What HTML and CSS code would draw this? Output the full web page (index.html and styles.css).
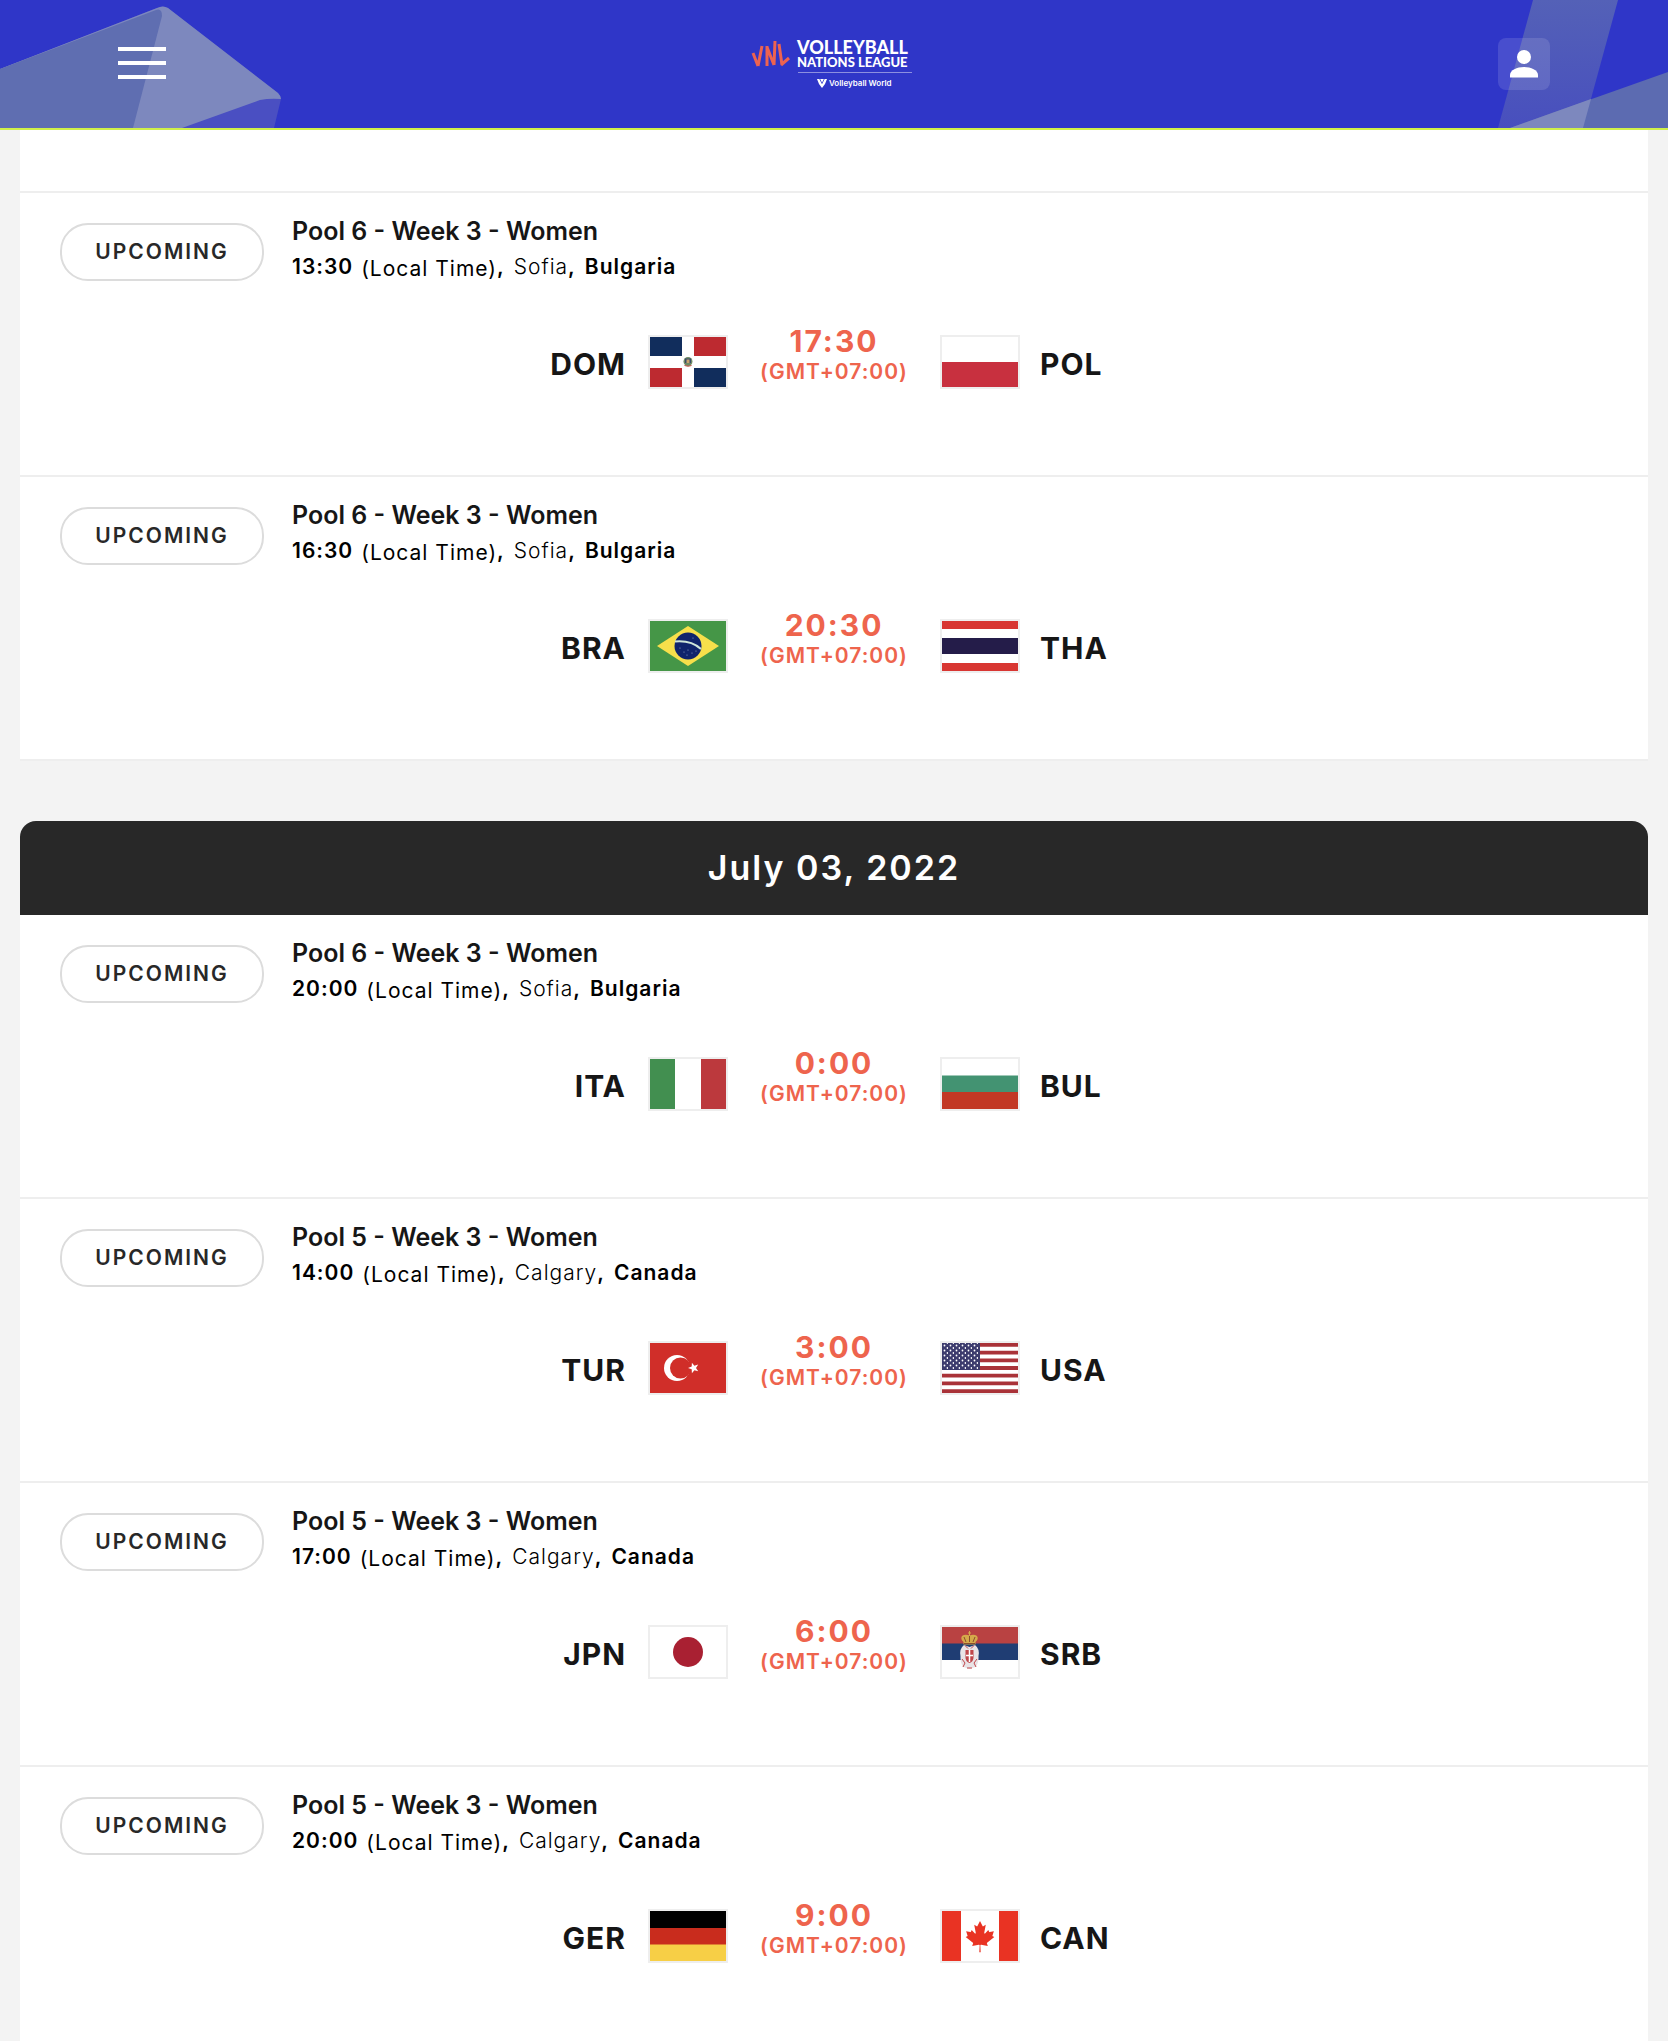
FILE: index.html
```html
<!DOCTYPE html>
<html lang="en">
<head>
<meta charset="utf-8">
<meta name="viewport" content="width=device-width, initial-scale=1">
<title>Volleyball Nations League – Schedule</title>
<link rel="stylesheet" href="styles.css">
</head>
<body>

<header class="site-header">
  <svg class="deco deco-left" width="284" height="128" viewBox="0 0 284 128" aria-hidden="true">
    <path d="M0 69 157 8Q163 5 168 8L278 93Q281 96 281 99L274 128H0z" fill="#4a4fc2"/>
    <path d="M0 69 157 8Q163 5 168 8L278 93Q281 96 281 99Q270 98 260 100L182 128H0z" fill="#7d88be"/>
    <path d="M0 69 156 10Q162 8 162 16L133 128H0z" fill="#5f6eb1"/>
  </svg>
  <svg class="deco deco-right" width="170" height="128" viewBox="0 0 170 128" aria-hidden="true">
    <defs>
      <linearGradient id="band" x1="0" y1="0" x2="0" y2="1"><stop offset="0" stop-color="#5461b7"/><stop offset="1" stop-color="#484fbe"/></linearGradient>
    </defs>
    <path d="M35 0H120L85 128H0z" fill="url(#band)"/>
    <path d="M12 128 170 72V128z" fill="#5c6bb1"/>
    <path d="M12 128 93 99 85 128z" fill="#7d88be"/>
  </svg>

  <button class="menu-button" type="button" aria-label="Menu">
    <span class="menu-bar"></span><span class="menu-bar"></span><span class="menu-bar"></span>
  </button>

  <a class="logo" href="#" aria-label="Volleyball Nations League">
    <svg width="166" height="64" viewBox="0 -6 166 64" aria-hidden="true">
      <g fill="none" stroke="#ed6350" stroke-width="3">
        <path d="M2 15 7 28M11 8 7 28"/>
        <path d="M16 28V8M16 9 23 27M24 3 23 27"/>
        <path d="M28 6 31 27M30 27 38 20"/>
      </g>
      <text class="logo-main" x="46" y="16">VOLLEYBALL</text>
      <text class="logo-sub" x="46" y="29">NATIONS LEAGUE</text>
      <path d="M47 34.500H161" stroke="#8c8fe0"/>
      <path d="M66 41H76L74 46 71 50 68 46z" fill="#fff"/>
      <path d="M68.500 40.500 71 45.500 73.500 40.500" stroke="#2f36c8" fill="none" stroke-width=".8"/>
      <text class="logo-tag" x="78" y="48">Volleyball World</text>
    </svg>
  </a>

  <button class="user-button" type="button" aria-label="Account">
    <svg width="28" height="28" viewBox="0 0 28 28" aria-hidden="true"><circle cx="14" cy="7" r="7" fill="#fff"/><path d="M0 27.500V25C0 20 7 17 14 17S28 20 28 25V27.500z" fill="#fff"/></svg>
  </button>
</header>

<main class="schedule">
  <section class="day">
    <div class="match-tail"></div>

    <article class="match">
      <div class="match-info">
        <span class="badge">Upcoming</span>
        <div>
          <h3 class="match-title">Pool 6 - Week 3 - Women</h3>
          <p class="match-place"><b>13:30</b> <span class="local">(Local Time)</span><b>,</b> <span class="city">Sofia</span><b>,</b> <b class="country">Bulgaria</b></p>
        </div>
      </div>
      <div class="fixture">
        <span class="team home">DOM</span>
        <svg class="flag" viewBox="0 0 76 50" role="img" aria-label="Dominican Republic">
          <path fill="#fff" d="M0 0H76V50H0z"/>
          <path fill="#112d5c" d="M0 0H32V19H0zM44 31H76V50H44z"/>
          <path fill="#bd2a30" d="M44 0H76V19H44zM0 31H32V50H0z"/>
          <circle cx="38" cy="24.500" r="4.500" fill="#6f8a64"/>
          <path d="M35 21.500H41V26H35z" fill="#394c6c"/><path d="M36.500 22.500H39.500V26H36.500z" fill="#c9a36a"/>
          <path d="M34.500 28.500Q38 30 41.500 28.500" stroke="#bd4a3a" fill="none"/>
        </svg>
        <p class="kickoff"><time class="clock">17:30</time><span class="zone">(GMT+07:00)</span></p>
        <svg class="flag" viewBox="0 0 76 50" role="img" aria-label="Poland"><path fill="#fff" d="M0 0H76V25H0z"/><path fill="#c8303f" d="M0 25H76V50H0z"/></svg>
        <span class="team">POL</span>
      </div>
    </article>

    <article class="match">
      <div class="match-info">
        <span class="badge">Upcoming</span>
        <div>
          <h3 class="match-title">Pool 6 - Week 3 - Women</h3>
          <p class="match-place"><b>16:30</b> <span class="local">(Local Time)</span><b>,</b> <span class="city">Sofia</span><b>,</b> <b class="country">Bulgaria</b></p>
        </div>
      </div>
      <div class="fixture">
        <span class="team home">BRA</span>
        <svg class="flag" viewBox="0 0 76 50" role="img" aria-label="Brazil">
          <path fill="#459647" d="M0 0H76V50H0z"/>
          <path fill="#f7df4b" d="M38 5 69 25 38 45 7 25z"/>
          <circle cx="38" cy="25" r="13.500" fill="#10246c"/>
          <path d="M25 20.500Q41 19 51 28" stroke="#cfe6da" stroke-width="2" fill="none"/>
          <g fill="#8fa0c8"><circle cx="30" cy="27" r=".6"/><circle cx="34" cy="31" r=".6"/><circle cx="38" cy="29" r=".6"/><circle cx="37" cy="34" r=".6"/><circle cx="42" cy="32" r=".6"/><circle cx="46" cy="30" r=".6"/><circle cx="43" cy="17" r=".6"/></g>
        </svg>
        <p class="kickoff"><time class="clock">20:30</time><span class="zone">(GMT+07:00)</span></p>
        <svg class="flag" viewBox="0 0 76 50" role="img" aria-label="Thailand"><path fill="#fff" d="M0 0H76V50H0z"/><path fill="#d83632" d="M0 0H76V8H0zM0 42H76V50H0z"/><path fill="#241c49" d="M0 17H76V33H0z"/></svg>
        <span class="team">THA</span>
      </div>
    </article>
  </section>

  <section class="day">
    <h2 class="day-title">July 03, 2022</h2>

    <article class="match">
      <div class="match-info">
        <span class="badge">Upcoming</span>
        <div>
          <h3 class="match-title">Pool 6 - Week 3 - Women</h3>
          <p class="match-place"><b>20:00</b> <span class="local">(Local Time)</span><b>,</b> <span class="city">Sofia</span><b>,</b> <b class="country">Bulgaria</b></p>
        </div>
      </div>
      <div class="fixture">
        <span class="team home">ITA</span>
        <svg class="flag" viewBox="0 0 76 50" role="img" aria-label="Italy"><path fill="#fff" d="M0 0H76V50H0z"/><path fill="#428f50" d="M0 0H25V50H0z"/><path fill="#bc393d" d="M51 0H76V50H51z"/></svg>
        <p class="kickoff"><time class="clock">0:00</time><span class="zone">(GMT+07:00)</span></p>
        <svg class="flag" viewBox="0 0 76 50" role="img" aria-label="Bulgaria"><path fill="#fff" d="M0 0H76V17H0z"/><path fill="#439372" d="M0 16.500H76V33H0z"/><path fill="#c23824" d="M0 33H76V50H0z"/></svg>
        <span class="team">BUL</span>
      </div>
    </article>

    <article class="match">
      <div class="match-info">
        <span class="badge">Upcoming</span>
        <div>
          <h3 class="match-title">Pool 5 - Week 3 - Women</h3>
          <p class="match-place"><b>14:00</b> <span class="local">(Local Time)</span><b>,</b> <span class="city">Calgary</span><b>,</b> <b class="country">Canada</b></p>
        </div>
      </div>
      <div class="fixture">
        <span class="team home">TUR</span>
        <svg class="flag" viewBox="0 0 76 50" role="img" aria-label="Turkey">
          <path fill="#d02e29" d="M0 0H76V50H0z"/>
          <circle cx="27" cy="25" r="13" fill="#fff"/><circle cx="30.500" cy="25" r="10.500" fill="#d02e29"/>
          <path fill="#fff" d="M38 25 41.700 23.600 41.900 19.800 44.400 22.800 48.200 21.600 46 25 48.200 28.300 44.400 27.200 41.900 30.200 41.700 26.300z"/>
        </svg>
        <p class="kickoff"><time class="clock">3:00</time><span class="zone">(GMT+07:00)</span></p>
        <svg class="flag" viewBox="0 0 76 50" role="img" aria-label="United States">
          <defs>
            <pattern id="stars" width="6" height="5" patternUnits="userSpaceOnUse"><circle cx="2.500" cy="2.500" r=".9" fill="#fff"/><circle cx="5.500" cy="5" r=".9" fill="#fff"/><circle cx="5.500" cy="0" r=".9" fill="#fff"/></pattern>
          </defs>
          <path fill="#fff" d="M0 0H76V50H0z"/>
          <path stroke="#a93238" stroke-width="3.850" d="M0 1.920H76M0 9.620H76M0 17.310H76M0 25H76M0 32.690H76M0 40.380H76M0 48.080H76"/>
          <path fill="#3c3b6d" d="M0 0H38V27H0z"/><path fill="url(#stars)" d="M0 0H37V26H0z"/>
        </svg>
        <span class="team">USA</span>
      </div>
    </article>

    <article class="match">
      <div class="match-info">
        <span class="badge">Upcoming</span>
        <div>
          <h3 class="match-title">Pool 5 - Week 3 - Women</h3>
          <p class="match-place"><b>17:00</b> <span class="local">(Local Time)</span><b>,</b> <span class="city">Calgary</span><b>,</b> <b class="country">Canada</b></p>
        </div>
      </div>
      <div class="fixture">
        <span class="team home">JPN</span>
        <svg class="flag" viewBox="0 0 76 50" role="img" aria-label="Japan"><path fill="#fff" d="M0 0H76V50H0z"/><circle cx="38" cy="25" r="15" fill="#a92032"/></svg>
        <p class="kickoff"><time class="clock">6:00</time><span class="zone">(GMT+07:00)</span></p>
        <svg class="flag" viewBox="0 0 76 50" role="img" aria-label="Serbia">
          <path fill="#fff" d="M0 0H76V50H0z"/><path fill="#b94242" d="M0 0H76V17H0z"/><path fill="#1f3d73" d="M0 16.500H76V33H0z"/>
          <path fill="#d5a94a" d="M20 9Q23 7 27.500 8.500 32 7 35 9 37 12 33.500 15V17.500H21.500V15Q18 12 20 9z"/>
          <path stroke="#8b4d2d" fill="none" d="M22 10 24 15M27.500 9V15M33 10 31 15M22 16.500H33"/>
          <path stroke="#d5a94a" d="M27.500 4V9M26 6H29"/>
          <path fill="#e9e3e6" d="M22 18 27.500 20 33 18Q38 22 36.500 29 37 36 33.500 40L27.500 42 21.500 40Q18 36 18.500 29 17 22 22 18z"/>
          <path fill="#c0474b" d="M23.500 23H31.500V31Q31 35 27.500 36 24 35 23.500 31z"/>
          <path stroke="#fff" fill="none" stroke-width="1.500" d="M27.500 23V35M24 28.500H31"/>
          <path stroke="#c0474b" fill="none" d="M23 18.500 26 21.500M32 18.500 29 21.500M20 32 23 36 21 40M35 32 32 36 34 40M25 41H30"/>
        </svg>
        <span class="team">SRB</span>
      </div>
    </article>

    <article class="match">
      <div class="match-info">
        <span class="badge">Upcoming</span>
        <div>
          <h3 class="match-title">Pool 5 - Week 3 - Women</h3>
          <p class="match-place"><b>20:00</b> <span class="local">(Local Time)</span><b>,</b> <span class="city">Calgary</span><b>,</b> <b class="country">Canada</b></p>
        </div>
      </div>
      <div class="fixture">
        <span class="team home">GER</span>
        <svg class="flag" viewBox="0 0 76 50" role="img" aria-label="Germany"><path d="M0 0H76V17H0z"/><path fill="#c92c1d" d="M0 17H76V34H0z"/><path fill="#f7cf46" d="M0 33.500H76V50H0z"/></svg>
        <p class="kickoff"><time class="clock">9:00</time><span class="zone">(GMT+07:00)</span></p>
        <svg class="flag" viewBox="0 0 76 50" role="img" aria-label="Canada">
          <path fill="#fff" d="M0 0H76V50H0z"/><path fill="#e93323" d="M0 0H19V50H0zM57 0H76V50H57z"/>
          <path fill="#e93323" transform="translate(38 25.500) scale(.0077)" d="M-90 2030l45-863a95 95 0 0 0-111-98l-859 151 116-320a65 65 0 0 0-20-73l-941-762 212-99a65 65 0 0 0 34-79l-186-572 542 115a65 65 0 0 0 73-38l105-247 423 454a65 65 0 0 0 111-57l-204-1052 327 189a65 65 0 0 0 91-27l332-652 332 652a65 65 0 0 0 91 27l327-189-204 1052a65 65 0 0 0 111 57l423-454 105 247a65 65 0 0 0 73 38l542-115-186 572a65 65 0 0 0 34 79l212 99-941 762a65 65 0 0 0-20 73l116 320-859-151a95 95 0 0 0-111 98l45 863z"/>
        </svg>
        <span class="team">CAN</span>
      </div>
    </article>
  </section>
</main>

</body>
</html>
```
FILE: styles.css
```css
* {
  box-sizing: border-box;
}

body {
  margin: 0;
  background: #f3f3f3;
  color: #161616;
  font-family: Inter, "Liberation Sans", sans-serif;
}

h2, h3, p {
  margin: 0;
}

/* Header */
.site-header {
  position: relative;
  display: flex;
  align-items: center;
  justify-content: space-between;
  height: 130px;
  padding: 0 118px;
  overflow: hidden;
  background: #2f36c8;
  border-bottom: 2px solid #d0f04a;
}

.deco {
  position: absolute;
  top: 0;
}

.deco-left {
  left: 0;
}

.deco-right {
  right: 0;
}

.menu-button {
  position: relative;
  display: flex;
  flex-direction: column;
  gap: 10px;
  width: 52px;
  padding: 0 0 2px;
  background: none;
  border: 0;
}

.menu-bar {
  width: 48px;
  height: 4px;
  background: #fff;
}

.logo {
  position: relative;
  display: block;
}

.logo svg {
  display: block;
}

.logo text {
  fill: #fff;
  font-family: Lato, sans-serif;
}

.logo .logo-main {
  font-size: 18px;
  font-weight: 900;
}

.logo .logo-sub {
  font-size: 13px;
  font-weight: 900;
}

.logo .logo-tag {
  font-family: Inter, sans-serif;
  font-size: 8px;
  font-weight: 600;
}

.user-button {
  position: relative;
  display: flex;
  align-items: center;
  justify-content: center;
  width: 52px;
  height: 52px;
  padding: 0;
  background: rgba(255, 255, 255, 0.12);
  border: 0;
  border-radius: 8px;
}

/* Schedule */
.schedule {
  display: flex;
  flex-direction: column;
  gap: 60px;
  padding: 0 20px;
}

.day {
  background: #fff;
  border-radius: 16px 16px 0 0;
}

.day:first-child {
  border-radius: 0;
}

.day-title {
  padding: 24px 0;
  border-radius: 16px 16px 0 0;
  background: #282828;
  color: #fff;
  font-size: 34px;
  font-weight: 600;
  line-height: 46px;
  letter-spacing: 2px;
  text-align: center;
}

.match-tail {
  height: 63px;
  border-bottom: 2px solid #eee;
}

.match {
  padding: 20px 0 84px;
  border-bottom: 2px solid #eee;
}

.day:last-child .match:last-child {
  padding-bottom: 76px;
  border-bottom: 0;
}

.match-info {
  display: flex;
  gap: 28px;
  padding: 0 40px;
}

.badge {
  width: 204px;
  height: 58px;
  margin-top: 10px;
  border: 2px solid #dcdcdc;
  border-radius: 28px;
  color: #282828;
  font-size: 21px;
  font-weight: 600;
  line-height: 54px;
  letter-spacing: 2px;
  text-align: center;
  text-transform: uppercase;
}

.match-title {
  font-size: 25px;
  font-weight: 600;
  line-height: 36px;
}

.match-place {
  display: flex;
  height: 36px;
  color: #000;
  font-size: 21px;
  line-height: 36px;
  letter-spacing: 1px;
}

.match-place b {
  font-weight: 600;
}

.local {
  margin-left: 8px;
  padding-top: 2px;
}

.city,
.match-place .country {
  margin-left: 9px;
}

.city {
  font-weight: 300;
}

.fixture {
  display: grid;
  grid-template-columns: 1fr 80px 212px 80px 1fr;
  align-items: start;
  margin-top: 39px;
}

.flag {
  display: block;
  width: 80px;
  height: 54px;
  margin-top: 11px;
  border: 2px solid #eee;
}

.team {
  padding: 13px 20px 0;
  font-size: 30px;
  font-weight: 700;
  line-height: 54px;
  letter-spacing: 1px;
}

.home {
  padding-right: 22px;
  text-align: right;
}

.kickoff {
  display: flex;
  flex-direction: column;
  color: #ee644d;
  font-weight: 700;
  text-align: center;
}

.clock {
  font-size: 30px;
  line-height: 34px;
  letter-spacing: 2px;
}

.zone {
  font-size: 21px;
  font-weight: 600;
  line-height: 28px;
  letter-spacing: 1px;
}
```
